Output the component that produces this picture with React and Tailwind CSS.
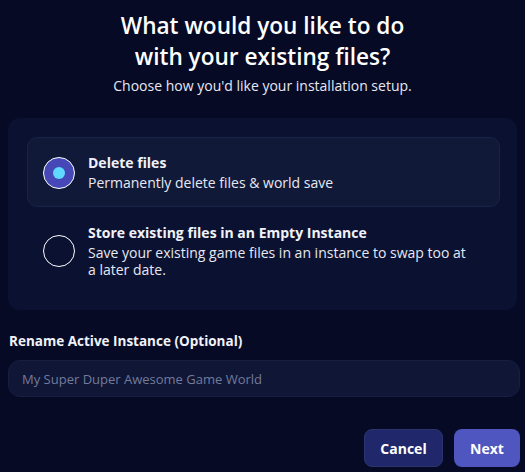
import React, { useState } from "react";

const options = [
  {
    id: "delete",
    title: "Delete files",
    desc: "Permanently delete files & world save",
  },
  {
    id: "store",
    title: "Store existing files in an Empty Instance",
    desc: "Save your existing game files in an instance to swap too at a later date.",
  },
];

const App = () => {
  const [choice, setChoice] = useState("delete");
  const [name, setName] = useState("");

  return (
    <div
      className="min-h-screen w-[525px] bg-[#060a25] text-white"
      style={{ fontFamily: "'Open Sans', Lato, sans-serif" }}
    >
      <div className="pt-[10px] text-center">
        <h1 className="text-[22.6px] font-semibold leading-[31px]">
          What would you like to do
          <br />
          with your existing files?
        </h1>
        <p className="mt-[5px] text-[14px] leading-[18px] text-[#e6e8f2]">
          Choose how you'd like your installation setup.
        </p>
      </div>

      <div className="mx-[8px] mt-[23px] rounded-[12px] bg-[#0b1131] pl-[19px] pr-[17px] pt-[19px] pb-[16px]">
        {options.map((opt) => {
          const active = choice === opt.id;
          return (
            <div
              key={opt.id}
              onClick={() => setChoice(opt.id)}
              className={
                active
                  ? "flex cursor-pointer items-center gap-[13px] rounded-[10px] border border-[#1a2248] bg-[#111938] pl-[15px] pr-[27px] pt-[16px] pb-[15px]"
                  : "flex cursor-pointer items-center gap-[13px] rounded-[10px] border border-transparent pl-[15px] pr-[27px] pt-[16px] pb-[15px]"
              }
            >
              <div
                className={
                  active
                    ? "flex h-[32px] w-[32px] shrink-0 items-center justify-center rounded-full border border-white bg-[#4548b6]"
                    : "flex h-[32px] w-[32px] shrink-0 items-center justify-center rounded-full border border-white"
                }
              >
                {active && (
                  <div className="h-[12px] w-[12px] rounded-full bg-[#5fd9ff]" />
                )}
              </div>
              <div className="text-[14px] leading-[17px]">
                <p className="font-bold text-[#f1f2f8]">{opt.title}</p>
                <p className="mt-[3px] text-[#e6e8f2]">{opt.desc}</p>
              </div>
            </div>
          );
        })}
      </div>

      <div className="mx-[8px] mt-[23px]">
        <label
          htmlFor="instanceName"
          className="block pl-[1px] text-[13.5px] font-bold leading-[17px] text-[#f1f2f8]"
        >
          Rename Active Instance (Optional)
        </label>
        <input
          id="instanceName"
          type="text"
          value={name}
          onChange={(e) => setName(e.target.value)}
          placeholder="My Super Duper Awesome Game World"
          className="mt-[10px] h-[37px] w-[512px] rounded-[12px] border border-[#161e42] bg-[#0f1636] px-[13px] text-[13px] text-white placeholder:text-[#737b9b] focus:outline-none"
        />
      </div>

      <div className="mx-[5px] mt-[32px] flex justify-end gap-[11px]">
        <button className="h-[38px] w-[79px] rounded-[8px] border border-[#2c3470] bg-[#20276a] text-[14px] font-bold text-white">
          Cancel
        </button>
        <button className="h-[38px] w-[66px] rounded-[8px] bg-[#5056bf] text-[14px] font-bold text-white">
          Next
        </button>
      </div>
    </div>
  );
};

export default App;
